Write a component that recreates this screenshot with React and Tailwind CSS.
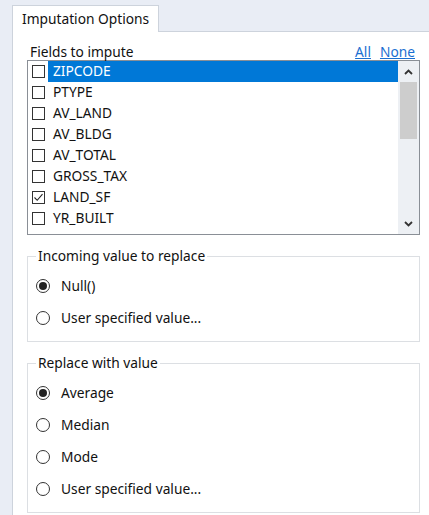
import { useState } from 'react';

const FIELDS = ['ZIPCODE', 'PTYPE', 'AV_LAND', 'AV_BLDG', 'AV_TOTAL', 'GROSS_TAX', 'LAND_SF', 'YR_BUILT'];

function Checkbox({ checked }) {
  return (
    <span className="flex h-[13px] w-[13px] shrink-0 items-center justify-center border border-[#333] bg-white">
      {checked && (
        <svg width="11" height="11" viewBox="0 0 11 11" fill="none">
          <path d="M1.5 5.5 L4.2 8.3 L9.5 2.2" stroke="#222" strokeWidth="1.1" />
        </svg>
      )}
    </span>
  );
}

function Radio({ label, checked, onClick }) {
  return (
    <div className="flex h-[32px] cursor-default items-center gap-[11px]" onClick={onClick}>
      <span className="flex h-[14px] w-[14px] shrink-0 items-center justify-center rounded-full border border-[#333] bg-white">
        {checked && <span className="h-[8px] w-[8px] rounded-full bg-[#222]" />}
      </span>
      <span className="text-[13.75px] text-[#111]">{label}</span>
    </div>
  );
}

function Group({ title, options, value, onChange, className }) {
  return (
    <fieldset className={`border border-[#dcdfe3] px-[8px] pb-[7px] pt-[6px] ${className}`}>
      <legend className="px-[2px] text-[13.75px] leading-[16px] text-[#111]">{title}</legend>
      {options.map((o) => (
        <Radio key={o} label={o} checked={value === o} onClick={() => onChange(o)} />
      ))}
    </fieldset>
  );
}

export default function App() {
  const [checked, setChecked] = useState({ LAND_SF: true });
  const [incoming, setIncoming] = useState('Null()');
  const [replace, setReplace] = useState('Average');

  return (
    <div
      className="h-[515px] w-[429px] overflow-hidden bg-[#e9edf5]"
      style={{ fontFamily: '"Noto Sans", "Open Sans", sans-serif' }}
    >
      <div className="flex h-[32px] items-end pl-[12px]">
        <div className="flex h-[27px] w-[147px] items-center border border-b-0 border-[#cdd3dc] bg-white pl-[9px] text-[13.75px] text-[#111]">
          Imputation Options
        </div>
        <div className="flex-1 border-b border-[#cdd3dc]" />
      </div>

      <div className="ml-[12px] h-[483px] border-l border-[#cdd3dc] bg-white pl-[14px] pr-[9px] pt-[12px]">
        <div className="flex items-center justify-between pl-[3px] pr-[5px] text-[13.75px] leading-[16px]">
          <span className="text-[#111]">Fields to impute</span>
          <span className="flex gap-[9px] text-[#1a6fd1]">
            <span className="underline">All</span>
            <span className="underline">None</span>
          </span>
        </div>

        <div className="flex h-[175px] border border-[#8a8f96]">
          <div className="flex-1 overflow-hidden">
            {FIELDS.map((f, i) => (
              <div key={f} className="flex h-[21px] items-center pl-[4px]">
                <span onClick={() => setChecked((c) => ({ ...c, [f]: !c[f] }))}>
                  <Checkbox checked={!!checked[f]} />
                </span>
                <span
                  className={`ml-[3px] flex h-[21px] flex-1 items-center pl-[5px] text-[13.75px] ${
                    i === 0 ? 'bg-[#0078d7] text-white' : 'text-[#111]'
                  }`}
                >
                  {f}
                </span>
              </div>
            ))}
          </div>
          <div className="flex w-[21px] flex-col bg-[#edf0f4]">
            <div className="flex h-[21px] items-center justify-center">
              <svg width="9" height="6" viewBox="0 0 9 6" fill="none">
                <path d="M1 5 L4.5 1.5 L8 5" stroke="#333" strokeWidth="1.8" />
              </svg>
            </div>
            <div className="mx-[2px] h-[57px] bg-[#cdcdcd]" />
            <div className="flex-1" />
            <div className="flex h-[21px] items-center justify-center">
              <svg width="9" height="6" viewBox="0 0 9 6" fill="none">
                <path d="M1 1 L4.5 4.5 L8 1" stroke="#333" strokeWidth="1.8" />
              </svg>
            </div>
          </div>
        </div>

        <Group
          className="mt-[13px]"
          title="Incoming value to replace"
          options={['Null()', 'User specified value...']}
          value={incoming}
          onChange={setIncoming}
        />
        <Group
          className="mt-[13px]"
          title="Replace with value"
          options={['Average', 'Median', 'Mode', 'User specified value...']}
          value={replace}
          onChange={setReplace}
        />
      </div>
    </div>
  );
}
